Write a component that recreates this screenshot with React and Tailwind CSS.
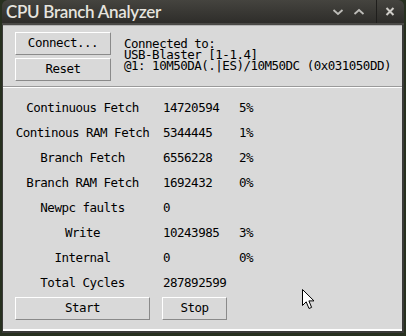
import React from "react";

const mono = "font-['DejaVu_Sans_Mono','Liberation_Mono',monospace] text-[12.5px] tracking-[-0.5px] text-black";

function Btn({ w, children }) {
  return (
    <div
      className={`${w} h-[23px] flex items-center justify-center bg-[#d9d9d9] border border-t-white border-l-white border-r-[#8a8a8a] border-b-[#8a8a8a] ${mono}`}
    >
      {children}
    </div>
  );
}

const rows = [
  ["Continuous Fetch", "14720594", "5%"],
  ["Continous RAM Fetch", "5344445", "1%"],
  ["Branch Fetch", "6556228", "2%"],
  ["Branch RAM Fetch", "1692432", "0%"],
  ["Newpc faults", "0", ""],
  ["Write", "10243985", "3%"],
  ["Internal", "0", "0%"],
  ["Total Cycles", "287892599", ""],
];

export default function App() {
  return (
    <div className="w-[406px] h-[336px] bg-[#27301f] relative overflow-hidden">
      <div className="ml-[2px] w-[402px] h-[333px] bg-[#3a3a38] rounded-t-[6px] flex flex-col overflow-hidden">
        {/* title bar */}
        <div className="h-[23px] flex items-center bg-gradient-to-b from-[#45443f] to-[#2e2d2a] rounded-t-[6px]">
          <div className="pl-[4px] text-[17px] font-semibold text-[#e6e4df] font-['Lato','Open_Sans',sans-serif] leading-none tracking-[-0.3px]">
            CPU Branch Analyzer
          </div>
          <div className="ml-auto flex h-full items-center pr-[2px]">
            <div className="w-[22px] h-full flex items-center justify-center">
              <svg width="12" height="8" viewBox="0 0 12 8">
                <path d="M1.5 2 L6 6 L10.5 2" stroke="#bdbcb8" strokeWidth="1.8" fill="none" />
              </svg>
            </div>
            <div className="w-[20px] h-full flex items-center justify-center">
              <svg width="12" height="8" viewBox="0 0 12 8">
                <path d="M1.5 6 L6 2 L10.5 6" stroke="#bdbcb8" strokeWidth="1.8" fill="none" />
              </svg>
            </div>
            <div className="w-[7px] h-full" />
            <div className="w-[1px] h-full bg-[#1f1e1c]" />
            <div className="w-[25px] h-full flex items-center justify-center">
              <svg width="10" height="9" viewBox="0 0 10 9">
                <path d="M1.5 1 L8.5 8 M8.5 1 L1.5 8" stroke="#cfcdc8" strokeWidth="2" fill="none" />
              </svg>
            </div>
          </div>
        </div>
        <div className="h-[2px] bg-[#4a4946]" />
        {/* body */}
        <div className="ml-[1px] w-[399px] h-[306px] bg-[#d9d9d9] flex flex-col">
          {/* top panel */}
          <div className="h-[61px] border-t border-[#b5b5b5] flex pl-[12px] pt-[6px]">
            <div className="flex flex-col gap-[3px]">
              <Btn w="w-[96px]">Connect...</Btn>
              <Btn w="w-[96px]">Reset</Btn>
            </div>
            <div className={`ml-[13px] mt-[6px] leading-[11px] ${mono}`}>
              <div>Connected to:</div>
              <div>USB-Blaster [1-1.4]</div>
              <div>@1: 10M50DA(.|ES)/10M50DC (0x031050DD)</div>
            </div>
          </div>
          <div className="h-[1px] bg-[#9a9a9a]" />
          <div className="h-[1px] bg-white" />
          {/* lower panel */}
          <div className="flex-1 flex flex-col pl-[12px] pt-[6px]">
            {rows.map(([l, n, p]) => (
              <div key={l} className={`h-[25px] pt-[4px] flex items-center ${mono}`}>
                <div className="w-[135px] text-center">{l}</div>
                <div className="ml-[13px] w-[70px]">{n}</div>
                <div className="w-[20px] text-right">{p}</div>
              </div>
            ))}
            <div className="mt-[3px] flex gap-[12px]">
              <Btn w="w-[135px]">Start</Btn>
              <Btn w="w-[65px]">Stop</Btn>
            </div>
          </div>
          <div className="h-[2px] bg-white" />
        </div>
      </div>
      {/* mouse cursor */}
      <svg className="absolute left-[302px] top-[289px]" width="14" height="22" viewBox="0 0 14 22">
        <path
          d="M0.5 0.5 L0.5 16.5 L4.2 12.8 L7 19.5 L9.6 18.4 L6.9 11.9 L12 11.9 Z"
          fill="white"
          stroke="black"
          strokeWidth="1"
          strokeLinejoin="miter"
        />
      </svg>
    </div>
  );
}
